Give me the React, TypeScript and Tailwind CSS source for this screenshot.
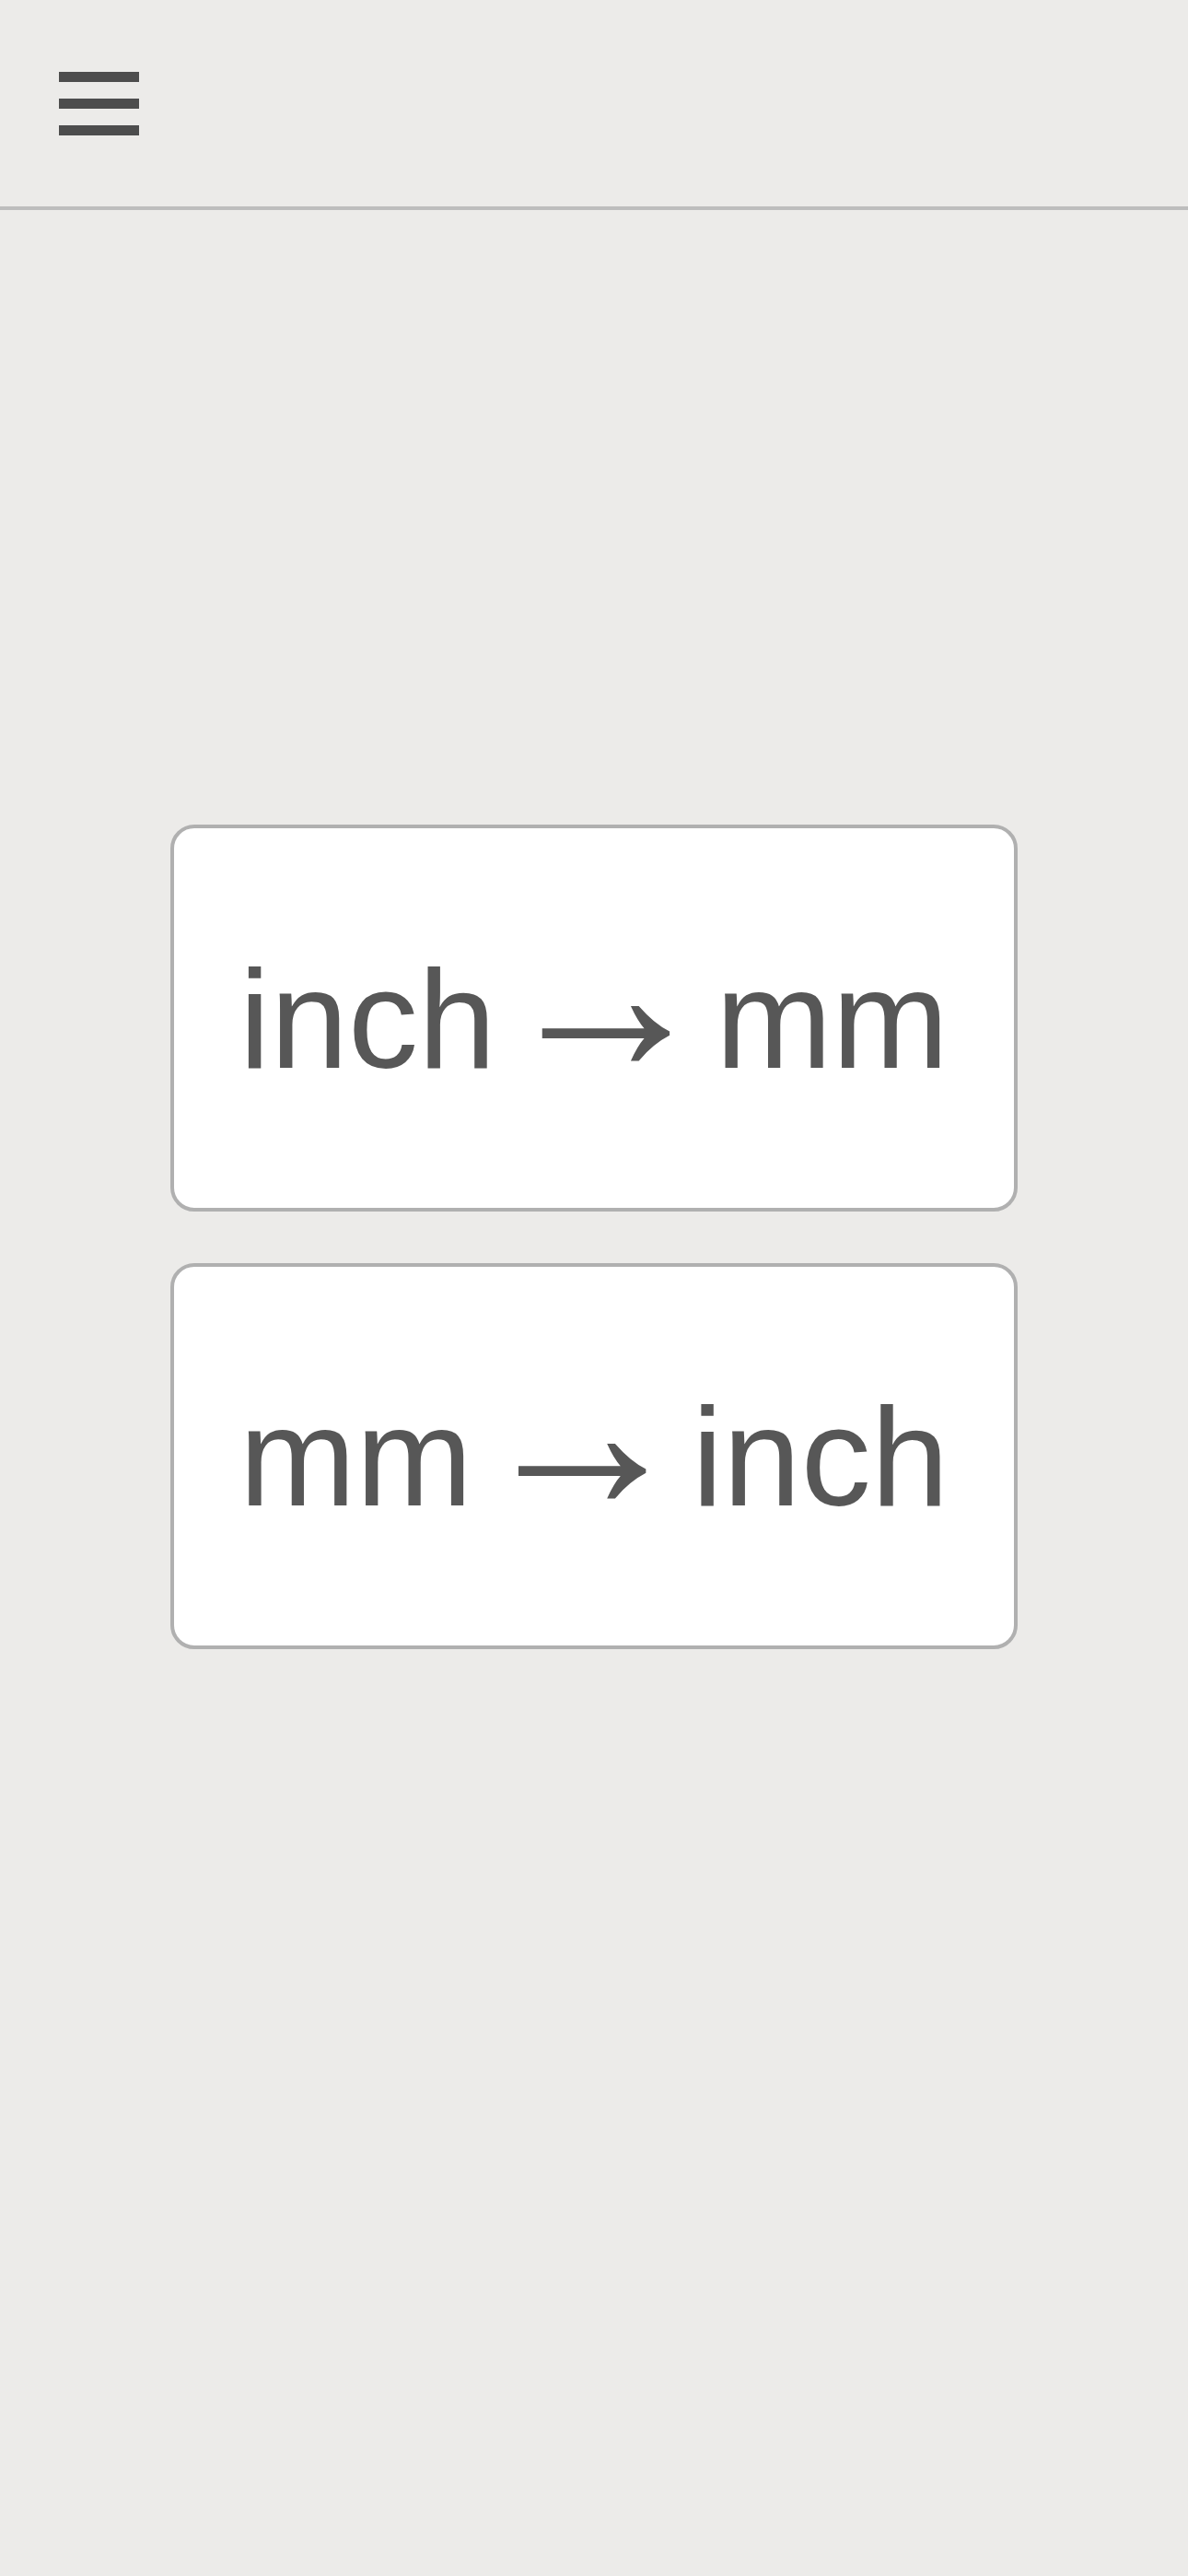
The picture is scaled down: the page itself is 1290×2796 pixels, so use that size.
import React from "react";

function Arrow() {
  return <span className="align-[-5px] font-['Noto_Sans_Math','Noto_Sans_CJK_JP',sans-serif]">→</span>;
}

export default function App() {
  return (
    <div
      className="min-h-[2796px] w-full bg-[#ecebe9] text-[#575757]"
      style={{ fontFamily: '"Liberation Sans", Arial, sans-serif' }}
    >
      <header className="flex h-[228px] items-center border-b-4 border-[#bdbdbd] pl-[64px]">
        <button className="flex flex-col gap-[18px]" aria-label="menu">
          <span className="block h-[11px] w-[87px] bg-[#4d4d4d]" />
          <span className="block h-[11px] w-[87px] bg-[#4d4d4d]" />
          <span className="block h-[11px] w-[87px] bg-[#4d4d4d]" />
        </button>
      </header>
      <main className="flex flex-col items-center gap-[56px] pt-[667px]">
        <button className="flex h-[420px] w-[920px] items-center justify-center rounded-[26px] border-4 border-[#b0b0b0] bg-white pt-[10px] text-[152px] leading-none text-[#575757]">
          <span className="whitespace-pre">
            inch <Arrow /> mm
          </span>
        </button>
        <button className="flex h-[419px] w-[920px] items-center justify-center rounded-[26px] border-4 border-[#b0b0b0] bg-white pt-[10px] text-[152px] leading-none text-[#575757]">
          <span className="whitespace-pre">
            mm <Arrow /> inch
          </span>
        </button>
      </main>
    </div>
  );
}
